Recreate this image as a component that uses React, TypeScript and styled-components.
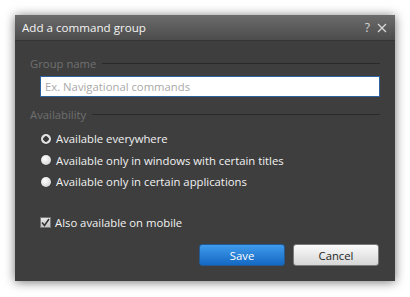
import styled, { createGlobalStyle } from "styled-components";

const GlobalStyle = createGlobalStyle`
	html, body {
		margin: 0;
		padding: 0;
		background: #ffffff;
	}
	body {
		font-family: "Open Sans", "Noto Sans", sans-serif;
	}
`;

const Page = styled.div`
	width: 410px;
	height: 297px;
	padding: 15px;
	box-sizing: border-box;
`;

const Window = styled.div`
	width: 380px;
	height: 266px;
	display: flex;
	flex-direction: column;
	background: #3e3e3e;
	box-shadow: 0 1px 10px rgba(0, 0, 0, 0.55);
`;

const TitleBar = styled.div`
	height: 26px;
	display: flex;
	align-items: center;
	padding: 0 8px 0 7px;
	background: linear-gradient(#6c6c6c, #4c4c4c);
	border-bottom: 1px solid #353535;
	box-sizing: border-box;
`;

const Title = styled.div`
	flex: 1;
	color: #f4f4f4;
	font-size: 11.6px;
`;

const TitleButton = styled.span`
	color: #d8d8d8;
	font-size: 12px;
	margin-left: 7px;
	display: flex;
	align-items: center;
`;

const Body = styled.div`
	flex: 1;
	display: flex;
	flex-direction: column;
	padding: 14px 15px 15px 15px;
`;

const SectionHead = styled.div<{ $gap?: number }>`
	display: flex;
	align-items: center;
	height: 16px;
	margin-top: ${(p) => p.$gap ?? 0}px;
	color: #707070;
	font-size: 11.3px;
	&::after {
		content: "";
		flex: 1;
		height: 1px;
		margin-left: 6px;
		background: #2a2a2a;
	}
`;

const TextInput = styled.input`
	margin: 5px 0 0 10px;
	height: 21px;
	box-sizing: border-box;
	border: 1px solid #2d62a0;
	background: #ffffff;
	padding: 0 4px;
	font-family: inherit;
	font-size: 11.3px;
	outline: none;
	&::placeholder {
		color: #a9a9a9;
	}
`;

const OptionList = styled.div`
	display: flex;
	flex-direction: column;
	margin: 6px 0 0 10px;
`;

const Option = styled.label`
	display: flex;
	align-items: center;
	height: 21.5px;
	color: #f2f2f2;
	font-size: 11.3px;
`;

const Radio = styled.span<{ $checked?: boolean }>`
	width: 10px;
	height: 10px;
	border-radius: 50%;
	margin: 0 5px 0 1px;
	box-sizing: border-box;
	background: ${(p) =>
		p.$checked
			? "radial-gradient(circle, #3a3a3a 0 2.5px, #e0e0e0 3px)"
			: "radial-gradient(circle at 40% 35%, #ffffff, #c8c8c8)"};
	box-shadow: 0 0 1px rgba(0, 0, 0, 0.6);
`;

const Check = styled.span`
	width: 11px;
	height: 11px;
	margin-right: 4px;
	background: linear-gradient(#e8e8e8, #c4c4c4);
	border: 1px solid #777;
	box-sizing: border-box;
	display: flex;
	align-items: center;
	justify-content: center;
`;

const CheckRow = styled(Option)`
	margin: 19px 0 0 10px;
`;

const Footer = styled.div`
	display: flex;
	justify-content: flex-end;
	gap: 8px;
	margin-top: auto;
	padding-right: 1px;
`;

const Button = styled.button<{ $primary?: boolean }>`
	width: 86px;
	height: 22px;
	border-radius: 3px;
	font-family: inherit;
	font-size: 11.3px;
	padding: 0;
	border: 1px solid ${(p) => (p.$primary ? "#245a93" : "#7a7a7a")};
	color: ${(p) => (p.$primary ? "#ffffff" : "#1e1e1e")};
	background: ${(p) =>
		p.$primary
			? "linear-gradient(#3f9bec, #1468c2)"
			: "linear-gradient(#fbfbfb, #d6d6d6)"};
`;

const options = [
	{ text: "Available everywhere", checked: true },
	{ text: "Available only in windows with certain titles" },
	{ text: "Available only in certain applications" }
];

const App = () => {
	return (
		<>
			<GlobalStyle />
			<Page>
				<Window>
					<TitleBar>
						<Title>Add a command group</Title>
						<TitleButton>?</TitleButton>
						<TitleButton>
							<svg width="10" height="10" viewBox="0 0 10 10">
								<path d="M1 1L9 9M9 1L1 9" stroke="#d8d8d8" strokeWidth="1.3" />
							</svg>
						</TitleButton>
					</TitleBar>
					<Body>
						<SectionHead>Group name</SectionHead>
						<TextInput placeholder="Ex. Navigational commands" />
						<SectionHead $gap={9}>Availability</SectionHead>
						<OptionList>
							{options.map((o) => (
								<Option key={o.text}>
									<Radio $checked={o.checked} />
									{o.text}
								</Option>
							))}
						</OptionList>
						<CheckRow>
							<Check>
								<svg width="9" height="9" viewBox="0 0 9 9">
									<path d="M1 4.5L3.5 7.5L8 1" stroke="#333" strokeWidth="1.6" fill="none" />
								</svg>
							</Check>
							Also available on mobile
						</CheckRow>
						<Footer>
							<Button $primary>Save</Button>
							<Button>Cancel</Button>
						</Footer>
					</Body>
				</Window>
			</Page>
		</>
	);
};

export default App;
